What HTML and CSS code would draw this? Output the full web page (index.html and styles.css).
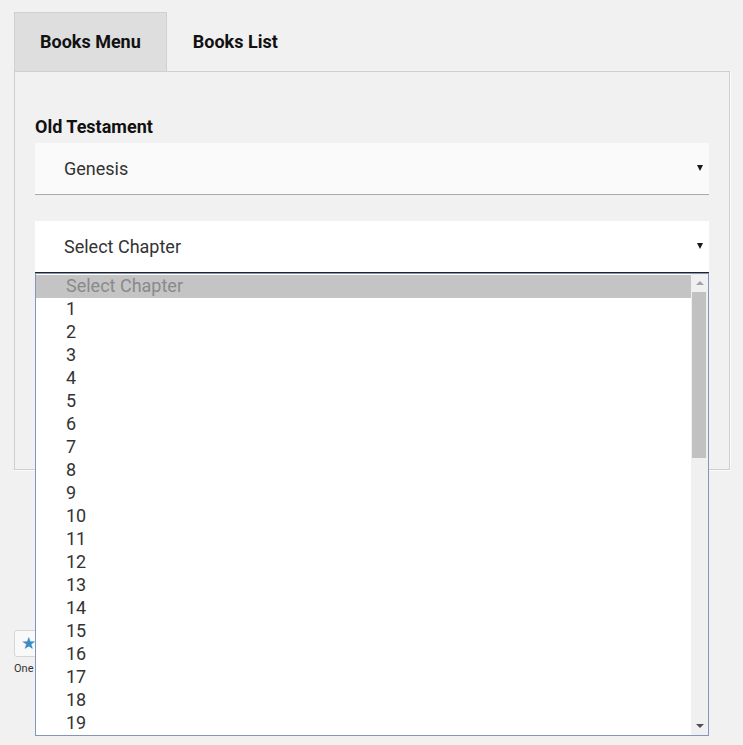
FILE: index.html
```html
<!DOCTYPE html>
<html lang="en">

<head>
  <meta charset="UTF-8">
  <title>Books Menu</title>
  <meta name="viewport" content="width=device-width, initial-scale=1.0">
  <link rel="stylesheet" href="styles.css">
</head>

<body>

  <div class="page">
    <div class="tabs">
      <div class="tab active">Books Menu</div>
      <div class="tab">Books List</div>
    </div>

    <div class="panel">
      <label class="field-label">Old Testament</label>
      <div class="select">
        <span>Genesis</span>
        <span class="caret"></span>
      </div>

      <div class="select-wrap">
        <div class="select open">
          <span>Select Chapter</span>
          <span class="caret"></span>
        </div>

        <!-- open dropdown of the chapter select -->
        <div class="dropdown">
          <ul class="options" id="chapterList">
            <li class="selected">Select Chapter</li>
          </ul>
          <div class="scrollbar">
            <div class="arrow up"></div>
            <div class="thumb"></div>
            <div class="arrow down"></div>
          </div>
        </div>
      </div>
    </div>

    <div class="rating">
      <div class="star-box">&#9733;</div>
      <div class="rating-label">One</div>
    </div>
  </div>

  <script>
    const list = document.getElementById('chapterList');
    for (let i = 1; i <= 19; i++) {
      const li = document.createElement('li');
      li.textContent = i;
      list.appendChild(li);
    }
  </script>

</body>

</html>
```

FILE: styles.css
```css
* {
  box-sizing: border-box;
}

body {
  font-family: Roboto, "Liberation Sans", Arial, sans-serif;
  background: #f1f1f1;
  color: #222;
  margin: 0;
}

.page {
  padding: 12px 13px 0 14px;
  min-height: 745px;
}

.tabs {
  display: flex;
}

.tab {
  height: 59px;
  line-height: 58px;
  padding: 0 25px;
  font-size: 18px;
  font-weight: bold;
  color: #111;
  border: 1px solid transparent;
  border-bottom: none;
}

.tab.active {
  background-color: #dedede;
  border-color: #d0d0d0;
}

.panel {
  border: 1px solid #cfcfcf;
  padding: 44px 20px 196px 20px;
  box-shadow: 1px 1px 0 #fafafa;
}

.field-label {
  display: block;
  font-size: 18px;
  font-weight: bold;
  line-height: 21px;
  margin-bottom: 6px;
  color: #111;
}

.select {
  position: relative;
  height: 52px;
  padding-left: 29px;
  display: flex;
  align-items: center;
  font-size: 18px;
  color: #333;
  background-color: #fafafa;
  border-bottom: 1px solid #a9a9a9;
}

.select.open {
  background-color: #fff;
  border-bottom-color: #222;
}

.caret {
  position: absolute;
  right: 6px;
  top: 22px;
  width: 0;
  height: 0;
  border-left: 3.5px solid transparent;
  border-right: 3.5px solid transparent;
  border-top: 6px solid #1a1a1a;
}

.select-wrap {
  position: relative;
  margin-top: 26px;
}

.dropdown {
  position: absolute;
  top: 100%;
  left: 0;
  right: 0;
  height: 463px;
  background: #fff;
  border: 1px solid #8395b8;
  display: flex;
  z-index: 10;
}

.options {
  flex: 1;
  list-style: none;
  margin: 0;
  padding: 1px 0 0 0;
  overflow: hidden;
  font-size: 18px;
  color: #333;
}

.options li {
  height: 23px;
  line-height: 22px;
  padding-left: 30px;
}

.options li.selected {
  background-color: #c4c4c4;
  color: #8a8a8a;
}

.scrollbar {
  width: 17px;
  background-color: #f0f0f0;
  position: relative;
}

.thumb {
  position: absolute;
  top: 18px;
  left: 1px;
  width: 14px;
  height: 166px;
  background-color: #c1c1c1;
}

.arrow {
  position: absolute;
  left: 5px;
  width: 0;
  height: 0;
  border-left: 4px solid transparent;
  border-right: 4px solid transparent;
}

.arrow.up {
  top: 7px;
  border-bottom: 4px solid #a3a3a3;
}

.arrow.down {
  bottom: 7px;
  border-top: 4px solid #505050;
}

.rating {
  margin-top: 160px;
}

.star-box {
  width: 28px;
  height: 27px;
  border: 1px solid #d6d6d6;
  border-radius: 3px;
  background-color: #f9f9f9;
  color: #3a8cc4;
  font-size: 17px;
  line-height: 25px;
  text-align: center;
}

.rating-label {
  margin-top: 5px;
  font-size: 11px;
  color: #333;
}
```
